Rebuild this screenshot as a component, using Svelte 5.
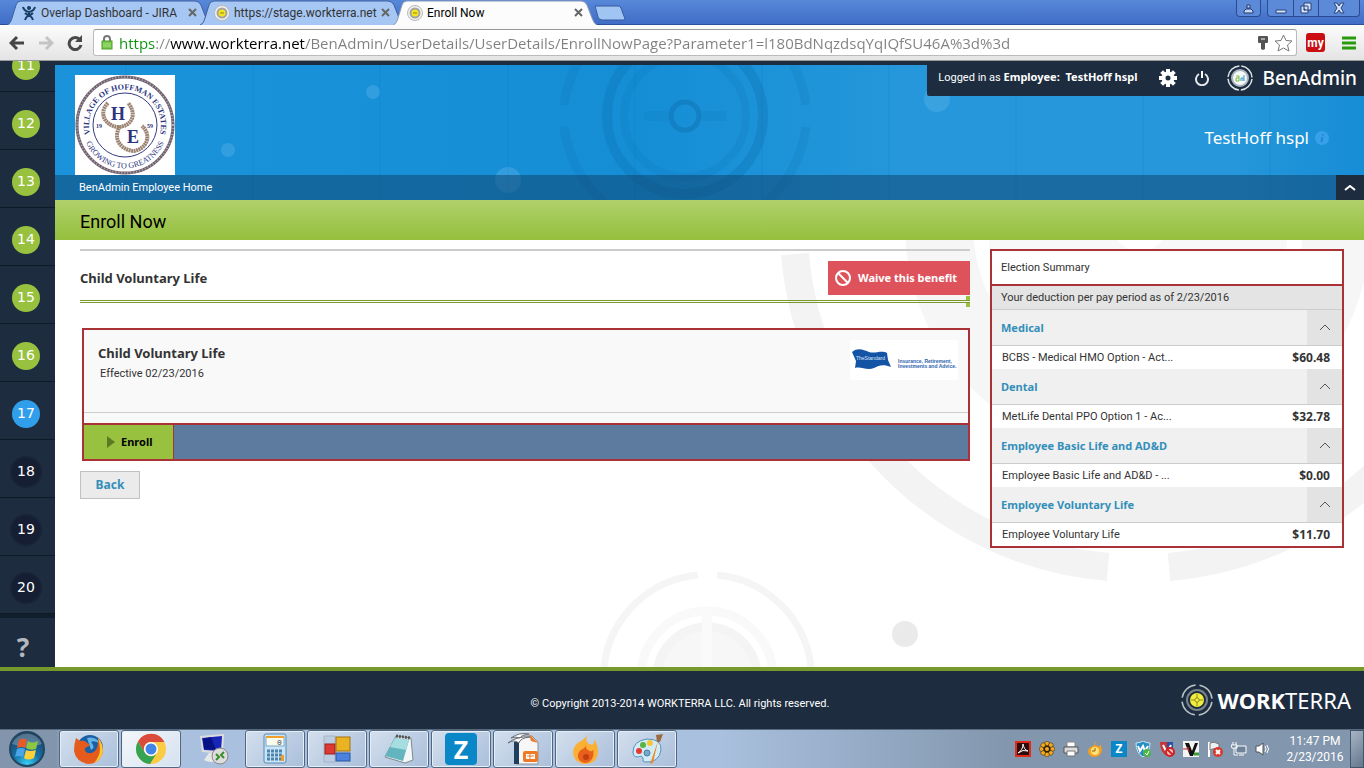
<script lang="ts">
  type Benefit = { name: string; plan: string; cost: string; open: boolean };

  let url = $state(
    "https://www.workterra.net/BenAdmin/UserDetails/UserDetails/EnrollNowPage?Parameter1=l180BdNqzdsqYqIQfSU46A%3d%3d",
  );
  let currentStep = $state(17);

  let benefits: Benefit[] = $state([
    { name: "Medical", plan: "BCBS - Medical HMO Option - Act...", cost: "$60.48", open: true },
    { name: "Dental", plan: "MetLife Dental PPO Option 1 - Ac...", cost: "$32.78", open: true },
    { name: "Employee Basic Life and AD&D", plan: "Employee Basic Life and AD&D - ...", cost: "$0.00", open: true },
    { name: "Employee Voluntary Life", plan: "Employee Voluntary Life", cost: "$11.70", open: true },
  ]);

  const tabs = [
    { title: "Overlap Dashboard - JIRA", icon: "jira", active: false },
    { title: "https://stage.workterra.net", icon: "terra", active: false },
    { title: "Enroll Now", icon: "terra", active: true },
  ];
  const steps = [11, 12, 13, 14, 15, 16, 17, 18, 19, 20];
  const petals = [0, 45, 90, 135, 180, 225, 270, 315];
</script>

{#snippet target(size: number, dot: string)}
  <svg width={size} height={size} viewBox="0 0 32 32" aria-hidden="true">
    <g fill="none">
      <circle cx="16" cy="16" r="15" stroke="#b9c0c6" stroke-width="1.5" stroke-dasharray="19.6 4" stroke-dashoffset="-2" />
      <circle cx="16" cy="16" r="10" stroke="#79838d" stroke-width="2" />
      <circle cx="16" cy="16" r="7" fill={dot} />
      <path d="M16 10v12M10 16h12" stroke="#8d8f2c" />
      <circle cx="16" cy="16" r="2.2" fill={dot} stroke="#8d8f2c" />
    </g>
  </svg>
{/snippet}

<div class="desktop">
  <header class="browser">
    <div class="tab-strip">
      <div class="tabs">
        {#each tabs as tab}
          <div class="tab" class:active={tab.active}>
            <svg class="tab-shape" viewBox="0 0 204 25" preserveAspectRatio="none" aria-hidden="true">
              <path
                d="M0 25C3 24 4 21 5 18L9 5Q10 1 14 1H188Q192 1 194 5L199 18Q201 24 204 25"
                fill={tab.active ? "#fcfcfc" : "#a6c6f3"}
                stroke={tab.active ? "#8898b8" : "#3f5f9f"}
              />
            </svg>
            {#if tab.icon === "jira"}
              <svg width="16" height="16" viewBox="0 0 16 16" aria-hidden="true">
                <circle cx="8" cy="3" r="2" fill="#173f66" />
                <path d="M2 2Q3 6 8 7Q13 6 14 2M8 7V10M8 10Q5 12 4 15M8 10Q11 12 12 15M4 8Q8 12 12 8" fill="none" stroke="#173f66" stroke-width="2" />
              </svg>
            {:else}
              <svg width="16" height="16" viewBox="0 0 16 16" aria-hidden="true">
                <circle cx="8" cy="8" r="7.500" fill="#f1f1f1" stroke="#b9b9b9" />
                <circle cx="8" cy="8" r="4.500" fill="#f5e51b" stroke="#a3a3a3" stroke-width="2" />
                <path d="M6 8h4" stroke="#8f861a" />
              </svg>
            {/if}
            <span class="tab-title">{tab.title}</span>
            <button class="tab-close" aria-label="Close tab">
              <svg width="9" height="9" viewBox="0 0 9 9"><path d="M1 1l7 7M8 1l-7 7" stroke="#666" stroke-width="2" /></svg>
            </button>
          </div>
        {/each}
        <button class="new-tab" aria-label="New tab">
          <svg width="32" height="16" viewBox="0 0 32 16">
            <path d="M1 1H24Q26 1 27 3L31 14Q31 15 29 15H8Q5 15 4 12Z" fill="#a1c5f3" stroke="#3659a0" />
          </svg>
        </button>
      </div>
      <div class="window-controls">
        <button class="user-btn" aria-label="Profile">
          <svg width="11" height="11" viewBox="0 0 11 11"><path d="M1 10V8L3 6H8L10 8V10ZM4 5V2H7V5Z" fill="#c4d7f4" stroke="#20386e" /></svg>
        </button>
        <div class="window-group">
          <button aria-label="Minimize"><svg width="12" height="12" viewBox="0 0 12 12"><path d="M1 8H11V11H1Z" fill="#d4e2f8" stroke="#27427b" /></svg></button>
          <button aria-label="Restore"><svg width="12" height="12" viewBox="0 0 12 12"><path d="M4 1H11V8H4ZM1 4H8V11H1ZM4 7H5V8H4Z" fill="#d4e2f8" stroke="#27427b" /></svg></button>
          <button class="wide" aria-label="Close"><svg width="12" height="12" viewBox="0 0 12 12"><path d="M1 1H4L6 4L8 1H11L8 6L11 11H8L6 8L4 11H1L4 6Z" fill="#d4e2f8" stroke="#27427b" /></svg></button>
        </div>
      </div>
    </div>

    <div class="toolbar">
      <button class="tool" aria-label="Back">
        <svg width="16" height="16" viewBox="0 0 16 16"><path d="M8 2L2 8L8 14M2 8H15" fill="none" stroke="#454545" stroke-width="3" /></svg>
      </button>
      <button class="tool" aria-label="Forward">
        <svg width="16" height="16" viewBox="0 0 16 16"><path d="M8 2L14 8L8 14M14 8H1" fill="none" stroke="#c4c4c4" stroke-width="3" /></svg>
      </button>
      <button class="tool" aria-label="Reload">
        <svg width="16" height="16" viewBox="0 0 16 16"><path d="M13 5A6 6 0 1 0 14 10" fill="none" stroke="#484848" stroke-width="3" /><path d="M15 0V7H8Z" fill="#484848" /></svg>
      </button>
      <div class="address">
        <svg width="12" height="15" viewBox="0 0 12 15" aria-hidden="true">
          <path d="M3 7V4A3 3 0 0 1 9 4V7" fill="none" stroke="#777" stroke-width="2" />
          <rect x="1" y="6" width="10" height="8" fill="#79c74c" stroke="#4c9b2b" />
          <path d="M2 9H10M2 11H10" stroke="#a4df7f" />
        </svg>
        <input type="text" aria-label="Address" bind:value={url} spellcheck="false" />
        <svg width="10" height="14" viewBox="0 0 10 14" aria-hidden="true"><path d="M0 1Q0 0 1 0H9Q10 0 10 1V6Q10 7 9 7H7V13L5 14L3 13V7H1Q0 7 0 6Z" fill="#555" /><path d="M3 3H7" stroke="#fff" /></svg>
        <svg width="19" height="18" viewBox="0 0 19 18" aria-hidden="true"><path d="M9.500 1L12 6.500L18 7L13.500 11L15 17L9.500 14L4 17L5.500 11L1 7L7 6.500Z" fill="#fff" stroke="#777" /></svg>
      </div>
      <button class="tool my" aria-label="my extension">my</button>
      <button class="tool" aria-label="Menu">
        <svg width="14" height="14" viewBox="0 0 14 14"><path d="M0 2H14M0 7H14M0 12H14" stroke="#289a0b" stroke-width="3" /></svg>
      </button>
    </div>
  </header>

  <div class="app">
    <nav class="steps" aria-label="Steps">
      <div class="step-list">
        {#each steps as step}
          <button class="step" aria-label="Step {step}" onclick={() => (currentStep = step)}>
            <span class="bubble" class:done={step < currentStep} class:current={step === currentStep}>{step}</span>
          </button>
        {/each}
      </div>
      <button class="help" aria-label="Help">?</button>
    </nav>

    <div class="page">
      <div class="banner">
        <svg class="banner-art" width="1309" height="135" viewBox="0 0 1309 135" aria-hidden="true">
          <g fill="none" stroke="#0d6fae" stroke-opacity=".32">
            <path d="M509 40A122 122 0 0 1 751 40M509 62A122 122 0 0 0 751 62" stroke-width="9" stroke-opacity=".18" />
            <circle cx="630" cy="51" r="78" stroke-width="10" />
            <circle cx="630" cy="51" r="61" stroke-width="8" stroke-opacity=".16" />
            <circle cx="630" cy="51" r="14" stroke-width="5" stroke-opacity=".45" />
            <path d="M589 51H613M647 51H671" stroke-width="10" stroke-opacity=".14" />
            <path d="M71 0V135M198 0V135M325 0V135M453 0V135M580 0V135M707 0V135M834 0V135M961 0V135M1088 0V135M1215 0V135" stroke-opacity=".2" />
          </g>
          <g fill="#6fbdf0" fill-opacity=".3">
            <circle cx="318" cy="27" r="7" />
            <circle cx="173" cy="85" r="7" />
            <circle cx="453" cy="115" r="13" />
            <circle cx="882" cy="34" r="13" />
          </g>
        </svg>

        <div class="banner-main">
          <svg class="seal" width="100" height="100" viewBox="0 0 100 100" role="img" aria-label="Village of Hoffman Estates seal">
            <defs>
              <path id="seal-top" d="M17.500 66A36 36 0 1 1 82.500 66" />
              <path id="seal-bottom" d="M9 62A42.500 42.500 0 0 0 91 62" />
            </defs>
            <rect width="100" height="100" fill="#fff" />
            <circle cx="50" cy="50" r="48" fill="none" stroke="#6d6070" stroke-width="3" />
            <circle cx="50" cy="50" r="48" fill="none" stroke="#b9a9a9" stroke-width="2" stroke-dasharray="1 2" />
            <circle cx="50" cy="50" r="32" fill="none" stroke="#343a80" />
            <g fill="none" stroke="#9c8372" stroke-width="4" stroke-dasharray="2 .5">
              <path d="M33 28C23 38 30 50 42 52C58 52 62 38 53 28" />
              <path d="M45 51C37 64 46 75 59 76C72 74 77 60 67 51" />
            </g>
            <g fill="#2c347e" font-family="Liberation Serif, serif" font-weight="bold">
              <text x="36" y="45" font-size="18">H</text>
              <text x="52" y="68" font-size="18">E</text>
              <text x="21" y="53" font-size="6">19</text>
              <text x="72" y="53" font-size="6">59</text>
              <text font-size="8"><textPath href="#seal-top" startOffset="50%" text-anchor="middle">VILLAGE OF HOFFMAN ESTATES</textPath></text>
              <text font-size="8" font-weight="normal"><textPath href="#seal-bottom" startOffset="50%" text-anchor="middle">GROWING TO GREATNESS</textPath></text>
            </g>
          </svg>

          <div class="banner-side">
            <div class="user-bar">
              <span>Logged in as <b>Employee:&nbsp; TestHoff hspl</b></span>
              <button class="icon-btn" aria-label="Settings">
                <svg width="18" height="18" viewBox="0 0 18 18">
                  <g fill="#fff">
                    {#each petals as angle}
                      <rect x="7" y="0" width="4" height="5" transform="rotate({angle} 9 9)" />
                    {/each}
                  </g>
                  <circle cx="9" cy="9" r="4.500" fill="none" stroke="#fff" stroke-width="4" />
                </svg>
              </button>
              <button class="icon-btn" aria-label="Log out">
                <svg width="14" height="16" viewBox="0 0 14 16"><path d="M4 4A6 6 0 1 0 10 4" fill="none" stroke="#e4e7ea" stroke-width="2" /><path d="M7 1V8" stroke="#fff" stroke-width="2" /></svg>
              </button>
              <div class="product">
                <svg width="26" height="26" viewBox="0 0 26 26" aria-hidden="true">
                  <g fill="none">
                    <circle cx="13" cy="13" r="12" stroke="#dfe5ea" stroke-width="1.500" stroke-dasharray="16.850 2" stroke-dashoffset="-1" />
                    <circle cx="13" cy="13" r="8" fill="#f4f8f8" stroke="#a9b4be" stroke-width="2" />
                    <path d="M9 11H12V16H9V13H12" stroke="#7fb840" stroke-width="1" />
                    <path d="M14 16V13H16V16M17 16V10" stroke="#3599c9" stroke-width="1" />
                  </g>
                </svg>
                <span>BenAdmin</span>
              </div>
            </div>
            <div class="member">
              <span>TestHoff hspl</span>
              <svg width="14" height="14" viewBox="0 0 14 14" aria-hidden="true"><circle cx="7" cy="7" r="7" fill="#35a1ec" /><path d="M8 3L7.700 4.500M7.300 6L6.500 11" stroke="#2486cd" stroke-width="2" /></svg>
            </div>
          </div>
        </div>

        <div class="breadcrumb">
          <a href="#home">BenAdmin Employee Home</a>
          <button aria-label="Collapse header">
            <svg width="12" height="6" viewBox="0 0 12 6"><path d="M1 5L6 1L11 5" fill="none" stroke="#fff" stroke-width="2" /></svg>
          </button>
        </div>
      </div>

      <h1>Enroll Now</h1>

      <div class="content">
        <svg class="content-art" width="1309" height="427" viewBox="0 0 1309 427" aria-hidden="true">
          <g fill="none">
            <circle cx="1083" cy="-15" r="233" fill="#f6f6f6" />
            <circle cx="1083" cy="-15" r="165" fill="#fff" />
            <circle cx="1083" cy="-15" r="150" fill="#f8f8f8" />
            <circle cx="1085" cy="-15" r="27" fill="#fff" />
            <path d="M740 14A343 343 0 0 0 1053 327M1114 327A343 343 0 0 0 1426 14" stroke="#f3f3f3" stroke-width="28" />
            <path d="M548 427A104 104 0 0 1 642 335M661 335A104 104 0 0 1 755 427" transform="translate(1)" stroke="#f5f5f5" stroke-width="7" />
            <circle cx="652" cy="437" r="66" stroke="#f9f9f9" stroke-width="9" />
            <circle cx="652" cy="437" r="50" fill="#f7f7f7" stroke="#f4f4f4" stroke-width="9" />
            <path d="M652 368V427" stroke="#fafafa" stroke-width="10" />
          </g>
          <circle cx="850" cy="394" r="13" fill="#eaeaea" />
        </svg>

        <main>
          <div class="benefit-head">
            <h2>Child Voluntary Life</h2>
            <button class="waive">
              <svg width="16" height="16" viewBox="0 0 16 16" aria-hidden="true"><circle cx="8" cy="8" r="7" fill="none" stroke="#fff" stroke-width="2" /><path d="M3 3L13 13" stroke="#fff" stroke-width="2" /></svg>
              Waive this benefit
            </button>
          </div>
          <div class="progress"></div>

          <section class="card">
            <div class="card-body">
              <div>
                <h2>Child Voluntary Life</h2>
                <p>Effective 02/23/2016</p>
              </div>
              <svg width="108" height="40" viewBox="0 0 108 40" role="img" aria-label="The Standard">
                <rect width="108" height="40" fill="#fff" />
                <path d="M2 12C8 7 14 10 19 12C25 14 31 10 37 13L38 20L41 27C34 24 29 25 24 28C17 31 11 26 5 28L6 21Z" fill="#1454a5" />
                <g font-family="Liberation Sans, sans-serif">
                  <text x="6" y="20" font-size="5" fill="#dce8f8">TheStandard</text>
                  <g font-size="5" font-weight="bold" fill="#2d63ae">
                    <text x="48" y="23">Insurance, Retirement,</text>
                    <text x="48" y="28">Investments and Advice.</text>
                  </g>
                </g>
              </svg>
            </div>
            <div class="card-gap"></div>
            <div class="card-actions">
              <button>
                <svg width="8" height="12" viewBox="0 0 8 12" aria-hidden="true"><path d="M0 0L8 6L0 12Z" fill="#5c7a22" /></svg>
                Enroll
              </button>
            </div>
          </section>

          <button class="back">Back</button>
        </main>

        <aside>
          <h3>Election Summary</h3>
          <p>Your deduction per pay period as of 2/23/2016</p>
          {#each benefits as benefit}
            <button class="benefit" aria-expanded={benefit.open} onclick={() => (benefit.open = !benefit.open)}>
              <span>{benefit.name}</span>
              <span class="chevron">
                <svg width="12" height="7" viewBox="0 0 12 7" aria-hidden="true"><path d="M1 6L6 1L11 6" fill="none" stroke="#555" /></svg>
              </span>
            </button>
            {#if benefit.open}
              <table>
                <tbody>
                  <tr>
                    <td>{benefit.plan}</td>
                    <td class="cost">{benefit.cost}</td>
                  </tr>
                </tbody>
              </table>
            {/if}
          {/each}
        </aside>
      </div>
    </div>
  </div>

  <footer>
    <span></span>
    <span class="copyright">© Copyright 2013-2014 WORKTERRA LLC. All rights reserved.</span>
    <div class="brand">
      {@render target(32, "#f2ee3a")}
      <span><b>WORK</b>TERRA</span>
    </div>
  </footer>

  <div class="taskbar">
    <button class="start" aria-label="Start">
      <svg width="38" height="38" viewBox="0 0 38 38">
        <defs>
          <radialGradient id="orb" cx=".5" cy=".95" r=".9">
            <stop offset="0" stop-color="#39d3f5" />
            <stop offset=".45" stop-color="#1571a8" />
            <stop offset="1" stop-color="#1c4163" />
          </radialGradient>
        </defs>
        <circle cx="19" cy="19" r="17" fill="url(#orb)" stroke="#24455f" stroke-width="2" />
        <path d="M4 14A16 16 0 0 1 34 14Q19 20 4 14Z" fill="#fff" opacity=".25" />
        <path d="M11 10Q15 7 19 10L17 18Q13 16 9 18Z" fill="#ea5a28" />
        <path d="M20 11Q24 14 30 11L28 19Q22 21 18 18Z" fill="#8ec63f" />
        <path d="M9 19Q13 17 17 19L15 27Q11 25 7 27Z" fill="#4aa5e8" />
        <path d="M18 20Q22 22 28 20L26 28Q20 31 16 28Z" fill="#fcd03a" />
      </svg>
    </button>
    <div class="tasks">
      <button class="task" aria-label="Firefox">
        <svg width="32" height="32" viewBox="0 0 32 32">
          <circle cx="17" cy="15" r="13" fill="#1d5fa5" />
          <path d="M14 5Q23 3 27 11Q22 7 18 9Q23 14 18 17Z" fill="#60b5e5" />
          <path d="M3 5L7 8Q11 7 13 9L17 12L14 14Q10 15 13 19Q17 22 22 18Q26 14 25 5Q32 13 29 22Q25 31 15 31Q3 29 1 18Q1 11 3 5Z" fill="#e55b1b" />
          <path d="M25 5Q32 13 29 22Q26 28 21 30Q27 23 27 16Q27 10 25 5Z" fill="#fbc92d" />
        </svg>
      </button>
      <button class="task active" aria-label="Chrome">
        <svg width="32" height="32" viewBox="0 0 32 32">
          <circle cx="16" cy="16" r="15" fill="#fbcb43" />
          <path d="M3 8.500A15 15 0 0 1 29.500 9H16A7 7 0 0 0 9.500 19Z" fill="#da4b3e" />
          <path d="M3 8.500A15 15 0 0 0 15 31L21.500 20.500A7 7 0 0 1 9.500 19Z" fill="#34a353" />
          <circle cx="16" cy="16" r="7" fill="#fff" />
          <circle cx="16" cy="16" r="5.500" fill="#4285e8" />
        </svg>
      </button>
      <button class="task plain" aria-label="Remote Desktop">
        <svg width="32" height="32" viewBox="0 0 32 32">
          <path d="M3 3L27 1L26 21L5 19Z" fill="#ddd" />
          <path d="M5 5L25 3L24 18L7 17Z" fill="#1726b9" />
          <path d="M14 4L19 17L7 16L6 6Z" fill="#071285" />
          <path d="M12 20H18L21 27Q14 31 7 27Z" fill="#e8e8e8" />
          <circle cx="23" cy="23" r="8" fill="#ddd" stroke="#888" />
          <path d="M19 21L22 24L19 27M27 19L24 22L27 25" stroke="#398c2c" stroke-width="2" fill="none" />
        </svg>
      </button>
      <button class="task" aria-label="Calculator">
        <svg width="32" height="32" viewBox="0 0 32 32">
          <rect x="5" y="1" width="22" height="29" rx="2" fill="#c9e5f7" stroke="#578bb2" />
          <rect x="7" y="4" width="18" height="9" fill="#f8fbed" stroke="#7baac9" />
          <path d="M7 4H25" stroke="#f1a02c" stroke-width="2" />
          <text x="18" y="12" font-family="Liberation Mono, monospace" font-size="8" fill="#334">0</text>
          <path d="M8 18H24M8 22H24M8 26H24" stroke="#4c84ab" stroke-width="3" stroke-dasharray="3 1" />
          <path d="M22 22H25V28H22Z" fill="#f29a24" />
        </svg>
      </button>
      <button class="task" aria-label="Office tools">
        <svg width="32" height="32" viewBox="0 0 32 32">
          <path d="M3 3H14V29H3Z" fill="#bccde2" stroke="#a6b4c4" />
          <rect x="4" y="11" width="10" height="10" fill="#dc3a32" stroke="#9f1f1a" />
          <rect x="15" y="4" width="14" height="14" fill="#eab323" stroke="#a3730b" />
          <rect x="15" y="20" width="14" height="8" fill="#4b82df" stroke="#2955a2" />
        </svg>
      </button>
      <button class="task" aria-label="Notepad">
        <svg width="32" height="32" viewBox="0 0 32 32">
          <path d="M13 3L28 5L30 27L22 30L2 24Z" fill="#f3f6f6" stroke="#7b8a8f" />
          <path d="M12 5L26 7L20 28L2 23Z" fill="#62b5bf" />
          <path d="M12 5L26 7L23 17L7 14Z" fill="#a6dde0" />
          <path d="M13 3L27 5" stroke="#555" stroke-width="3" stroke-dasharray="2 1" />
        </svg>
      </button>
      <button class="task" aria-label="Zimbra">
        <span class="z-logo">Z</span>
      </button>
      <button class="task" aria-label="OpenOffice Impress">
        <svg width="32" height="32" viewBox="0 0 32 32">
          <path d="M9 3H25L31 9V31H9Z" fill="#f7f7f7" stroke="#8c929a" />
          <path d="M7 9H12V31H7Z" fill="#1f3e5d" />
          <path d="M22 1L31 10L24 8Z" fill="#ef7924" />
          <path d="M1 10Q10 3 23 4Q13 5 12 10Q7 6 1 10ZM4 5Q12 -1 22 1Q14 2 13 5Q8 3 4 5Z" fill="#fff" stroke="#6a7077" />
          <rect x="16" y="18" width="15" height="11" rx="2" fill="#ef7924" />
          <path d="M19 21H28V26H19Z" fill="#fff" />
          <path d="M20 23H27M23 21V26" stroke="#ef7924" />
        </svg>
      </button>
      <button class="task" aria-label="Flame">
        <svg width="32" height="32" viewBox="0 0 32 32">
          <path d="M19 0Q15 8 20 11Q26 14 25 6Q31 15 28 24Q24 32 14 31Q4 28 4 19Q5 11 12 8Q17 5 19 0Z" fill="#fbb034" />
          <path d="M17 11Q16 17 21 18Q24 19 24 16Q26 25 20 29Q13 32 9 25Q8 18 14 16Q17 14 17 11Z" fill="#e7611d" />
          <circle cx="17" cy="24" r="3" fill="#c33d10" />
        </svg>
      </button>
      <button class="task" aria-label="Paint">
        <svg width="32" height="32" viewBox="0 0 32 32">
          <path d="M2 19Q2 8 16 6Q31 6 30 17Q28 30 14 29Q11 29 12 25Q11 22 7 24Q2 24 2 19Z" fill="#d3ebf7" stroke="#5492bd" />
          <circle cx="8" cy="18" r="3" fill="#e23b31" />
          <circle cx="12" cy="12" r="3" fill="#59b442" />
          <circle cx="19" cy="10" r="3" fill="#f8c635" />
          <circle cx="16" cy="20" r="3" fill="#7aaacb" stroke="#447ba0" />
          <path d="M27 8L22 30L19 31L20 28Z" fill="#eb8a26" />
          <path d="M25 2L32 1L29 9L26 9Z" fill="#9b6b43" />
        </svg>
      </button>
    </div>

    <div class="tray">
      <svg width="16" height="16" viewBox="0 0 16 16" aria-hidden="true"><rect x="1" y="1" width="14" height="14" fill="#2c0b0b" stroke="#e22a1b" stroke-width="2" /><path d="M3 12Q8 9 8 3Q9 9 13 10Q8 8 3 12Z" fill="none" stroke="#fff" /></svg>
      <svg width="16" height="16" viewBox="0 0 16 16" aria-hidden="true">
        <circle cx="8" cy="8" r="5" fill="#292115" />
        {#each petals as angle}
          <circle cx="8" cy="2.500" r="2.300" fill="#f5a81c" stroke="#292115" stroke-width=".5" transform="rotate({angle} 8 8)" />
        {/each}
        <circle cx="8" cy="8" r="2" fill="#f5a81c" />
      </svg>
      <svg width="16" height="16" viewBox="0 0 16 16" aria-hidden="true"><path d="M4 1H12V6H4Z" fill="#fff" stroke="#888" /><path d="M1 6H15V12H1Z" fill="#ddd" stroke="#555" /><path d="M4 10H12V15H4Z" fill="#fff" stroke="#777" /></svg>
      <svg width="16" height="16" viewBox="0 0 16 16" aria-hidden="true"><path d="M9 0Q5 4 11 5Q14 6 13 3Q16 8 14 12Q12 16 7 16Q1 15 1 10Q2 6 6 5Q9 3 9 0Z" fill="#f6a01e" /><circle cx="8" cy="10" r="4" fill="#fbe27a" /><path d="M8 7V10H5" stroke="#8c5a0c" fill="none" /></svg>
      <span class="z-logo small">Z</span>
      <svg width="16" height="16" viewBox="0 0 16 16" aria-hidden="true"><path d="M1 2Q5 2 8 0Q11 2 15 2Q15 12 8 16Q1 12 1 2Z" fill="#258fc4" stroke="#cdeaf7" /><path d="M3 5L5 10L8 5L10 10L13 5" fill="none" stroke="#fff" stroke-width="2" /><circle cx="12" cy="12" r="4" fill="#4eb446" /><path d="M10 12L12 14L14 10" fill="none" stroke="#fff" /></svg>
      <svg width="16" height="16" viewBox="0 0 16 16" aria-hidden="true"><path d="M1 1H8V15Q1 11 1 1Z" fill="#c93434" /><path d="M8 1H14V8L8 15Z" fill="#2b4fa5" /><path d="M4 4L8 12L12 4" fill="none" stroke="#fff" stroke-width="2" /><circle cx="11" cy="11" r="4" fill="#f3c4c4" stroke="#cf2222" stroke-width="2" /><path d="M8 8L14 14" stroke="#cf2222" stroke-width="2" /></svg>
      <svg width="16" height="16" viewBox="0 0 16 16" aria-hidden="true"><rect width="16" height="16" fill="#f4f4f4" /><path d="M2 2H6L9 10L12 2H15L10 15H7Z" fill="#111" /><path d="M0 8H4L5 6L6 11" stroke="#b42424" fill="none" /><path d="M11 13H16" stroke="#3a9b3a" stroke-width="3" /></svg>
      <svg width="16" height="16" viewBox="0 0 16 16" aria-hidden="true"><path d="M2 1V16" stroke="#fff" stroke-width="2" /><path d="M3 2Q7 0 12 3V9Q7 6 3 9Z" fill="#eef1f4" stroke="#777" /><circle cx="11" cy="11" r="5" fill="#d7382b" /><path d="M9 9L13 13M13 9L9 13" stroke="#fff" stroke-width="2" /></svg>
      <svg width="16" height="16" viewBox="0 0 16 16" aria-hidden="true"><path d="M5 5H15V12H5ZM8 14H13M2 1V4M5 1V4M0 4H6V7H1ZM3 7V14H7" fill="#6f8298" stroke="#fff" /></svg>
      <svg width="16" height="16" viewBox="0 0 16 16" aria-hidden="true"><path d="M1 5H4L8 2V14L4 11H1Z" fill="#fff" stroke="#555" /><path d="M10 5Q12 8 10 11M12 4Q15 8 12 12" fill="none" stroke="#fff" /></svg>
      <div class="clock">
        <span>11:47 PM</span>
        <span>2/23/2016</span>
      </div>
    </div>
    <button class="show-desktop" aria-label="Show desktop"></button>
  </div>
</div>

<style>
  :global(body) {
    margin: 0;
  }

  .desktop {
    --navy: #1d2d3f;
    --red: #a83235;
    --green: #97c13f;
    --link: #338fba;
    --wide-font: "Noto Sans", sans-serif;
    display: flex;
    flex-direction: column;
    min-height: 100vh;
    background: #fff;
    color: #333;
    font-family: Roboto, sans-serif;
    font-size: 11px;
    line-height: 16px;
  }

  button {
    margin: 0;
    padding: 0;
    border: 0;
    background: none;
    color: inherit;
    font: inherit;
    cursor: pointer;
  }

  h1,
  h2,
  h3,
  p {
    margin: 0;
  }

  svg {
    display: block;
    flex-shrink: 0;
  }

  /* browser window */
  .tab-strip {
    display: flex;
    justify-content: space-between;
    height: 25px;
    background: linear-gradient(#5788d8, #3f6cc6);
    box-shadow: inset 0 -1px #2b509b;
    font-size: 12px;
  }

  .tabs {
    display: flex;
    padding-left: 7px;
  }

  .tab {
    position: relative;
    display: flex;
    align-items: center;
    gap: 4px;
    box-sizing: border-box;
    width: 204px;
    margin-right: -11px;
    padding: 0 14px;
    color: #333;
  }

  .tab.active {
    z-index: 1;
    color: #000;
  }

  .tab > * {
    position: relative;
  }

  .tab .tab-shape {
    position: absolute;
    inset: 0;
    width: 100%;
    height: 100%;
  }

  .tab-title {
    flex: 1;
    overflow: hidden;
    white-space: nowrap;
  }

  .new-tab {
    padding: 5px 0 4px 8px;
  }

  .window-controls {
    display: flex;
    gap: 6px;
    padding-right: 4px;
  }

  .user-btn,
  .window-group {
    box-sizing: border-box;
    height: 17px;
    border: 1px solid #2a4b92;
    border-top: 0;
    border-radius: 0 0 4px 4px;
    background: #5d8ad8;
  }

  .user-btn,
  .window-group button {
    display: flex;
    justify-content: center;
    align-items: center;
    width: 25px;
  }

  .window-group {
    display: flex;
  }

  .window-group button + button {
    border-left: 1px solid #2a4b92;
  }

  .window-group .wide {
    width: 41px;
  }

  .toolbar {
    display: flex;
    align-items: center;
    gap: 13px;
    height: 35px;
    padding: 0 8px 0 9px;
    border-bottom: 1px solid #999;
    background: linear-gradient(#fcfcfc, #e4e4e4);
  }

  .tool {
    flex-shrink: 0;
  }

  .address {
    display: flex;
    flex: 1;
    align-items: center;
    gap: 6px;
    box-sizing: border-box;
    height: 27px;
    min-width: 0;
    margin: 0 -8px 0 -3px;
    padding: 0 3px 0 7px;
    border: 1px solid #bbb;
    border-top-color: #999;
    border-radius: 3px;
    background: #fff;
  }

  .address input {
    flex: 1;
    min-width: 0;
    padding: 0;
    border: 0;
    outline: 0;
    background: linear-gradient(90deg, #0b930b 0 36px, #888 36px 51px, #000 51px 186px, #808080 186px);
    background-clip: text;
    color: transparent;
    font-family: "Open Sans", sans-serif;
    font-size: 15px;
    line-height: 24px;
  }

  .my {
    width: 19px;
    height: 19px;
    margin: 0 4px;
    border-radius: 3px;
    background: #cb0e12;
    color: #fff;
    font-size: 12px;
    font-weight: bold;
  }

  /* application */
  .app {
    display: flex;
    flex: 1;
    background: var(--navy);
  }

  .steps {
    display: flex;
    flex-direction: column;
    width: 55px;
    flex-shrink: 0;
    color: #fff;
    font-family: "DejaVu Sans", sans-serif;
    font-size: 14px;
  }

  .step-list {
    display: flex;
    flex: 1 1 0;
    flex-direction: column;
    justify-content: flex-end;
    overflow: hidden;
    min-height: 0;
    border-bottom: 4px solid #111e2c;
  }

  .step {
    display: flex;
    flex-shrink: 0;
    justify-content: center;
    box-sizing: border-box;
    height: 58px;
    padding-top: 18px;
    padding-right: 3px;
    border-bottom: 1px solid #0e1a27;
  }

  .bubble {
    width: 28px;
    height: 28px;
    border-radius: 50%;
    background: #161e33;
    box-shadow: 0 0 0 2px #182339;
    line-height: 27px;
    text-align: center;
  }

  .bubble.done {
    background: var(--green);
    box-shadow: none;
  }

  .bubble.current {
    background: #319eeb;
    box-shadow: none;
  }

  .help {
    height: 49px;
    padding: 10px 9px 2px 0;
    color: #b5b9bf;
    font-family: var(--wide-font);
    font-size: 26px;
    font-weight: bold;
    line-height: 34px;
  }

  .page {
    display: flex;
    flex: 1;
    flex-direction: column;
    min-width: 0;
    padding-top: 4px;
  }

  .banner {
    position: relative;
    overflow: hidden;
    background: linear-gradient(90deg, #1b93db, #158ed6 45%, #2597da 65%, #2597da 90%, #178dd6);
    color: #fff;
  }

  .banner-art,
  .content-art {
    position: absolute;
    top: 0;
    left: 0;
  }

  .banner-main {
    position: relative;
    display: flex;
    align-items: flex-end;
    justify-content: space-between;
    height: 110px;
    padding-left: 20px;
  }

  .banner-side {
    display: flex;
    flex-direction: column;
    align-items: flex-end;
    align-self: flex-start;
    gap: 30px;
  }

  .user-bar {
    display: flex;
    align-items: center;
    height: 31px;
    padding: 0 7px 6px 11px;
    box-sizing: border-box;
    background: var(--navy);
    border-radius: 0 0 0 2px;
  }

  .user-bar b {
    font-family: var(--wide-font);
  }

  .icon-btn {
    margin-left: 22px;
  }

  .icon-btn + .icon-btn {
    margin-left: 18px;
  }

  .product {
    display: flex;
    align-items: center;
    gap: 9px;
    margin-left: 18px;
    font-family: var(--wide-font);
    font-size: 19px;
    font-weight: 500;
  }

  .member {
    display: flex;
    align-items: center;
    gap: 6px;
    padding-right: 35px;
    font-family: var(--wide-font);
    font-size: 17px;
    line-height: 24px;
  }

  .breadcrumb {
    position: relative;
    display: flex;
    justify-content: space-between;
    height: 25px;
    padding-left: 24px;
    background: rgba(14, 64, 104, 0.5);
    line-height: 26px;
  }

  .breadcrumb a {
    color: #fff;
    text-decoration: none;
  }

  .breadcrumb button {
    display: flex;
    align-items: center;
    justify-content: center;
    width: 28px;
    background: var(--navy);
  }

  h1 {
    height: 40px;
    padding-left: 25px;
    background: linear-gradient(#b0d06b, #95c03d);
    color: #000;
    font-size: 18px;
    font-weight: 400;
    line-height: 43px;
  }

  .content {
    position: relative;
    display: flex;
    flex: 1;
    align-items: flex-start;
    gap: 20px;
    overflow: hidden;
    padding: 9px 20px 20px 25px;
    background: #fff;
  }

  main {
    position: relative;
    flex: 1;
    min-width: 0;
    border-top: 2px solid #ccc;
  }

  h2 {
    color: #333;
    font-family: var(--wide-font);
    font-size: 13px;
    font-weight: bold;
    line-height: 20px;
  }

  .benefit-head {
    display: flex;
    align-items: center;
    justify-content: space-between;
    padding: 10px 0 5px;
  }

  .waive {
    display: flex;
    align-items: center;
    gap: 7px;
    width: 142px;
    height: 34px;
    padding-left: 7px;
    background: #de525c;
    color: #fff;
    font-family: var(--wide-font);
    font-weight: bold;
  }

  .progress {
    height: 1px;
    border: 1px solid #779a2b;
    border-width: 1px 0;
  }

  .progress::after {
    display: block;
    width: 4px;
    height: 11px;
    margin: -5px 0 0 auto;
    background: linear-gradient(var(--green) 0 4px, #779a2b 4px 5px, #fff 5px 6px, #779a2b 6px 7px, var(--green) 7px);
    content: "";
  }

  .card {
    margin: 25px 0 10px 2px;
    border: 2px solid var(--red);
    background: #f9f9f9;
  }

  .card-body {
    display: flex;
    align-items: flex-start;
    justify-content: space-between;
    box-sizing: border-box;
    height: 83px;
    padding: 10px 10px 0 14px;
    border-bottom: 1px solid #ccc;
  }

  .card-body h2 {
    padding-top: 3px;
  }

  .card-body p {
    padding: 3px 2px 0;
  }

  .card-gap {
    height: 10px;
  }

  .card-actions {
    display: flex;
    height: 34px;
    border-top: 2px solid var(--red);
    background: #5d7b9f;
  }

  .card-actions button {
    display: flex;
    align-items: center;
    gap: 6px;
    padding: 0 21px 0 23px;
    border-right: 1px solid var(--red);
    background: var(--green);
    color: #000;
    font-family: var(--wide-font);
    font-weight: bold;
  }

  .back {
    box-sizing: border-box;
    width: 60px;
    height: 28px;
    border: 1px solid #c1c1c1;
    background: #ebebeb;
    color: var(--link);
    font-family: var(--wide-font);
    font-size: 12px;
    font-weight: bold;
  }

  aside {
    position: relative;
    width: 350px;
    flex-shrink: 0;
    border: 2px solid var(--red);
    background: #fff;
  }

  h3 {
    padding: 1px 9px 0;
    border-bottom: 2px solid var(--red);
    font-size: 11px;
    font-weight: normal;
    line-height: 32px;
  }

  aside p {
    padding: 1px 9px 0;
    border-bottom: 1px solid #ccc;
    background: #e4e4e4;
    line-height: 22px;
  }

  .benefit {
    display: flex;
    align-items: center;
    justify-content: space-between;
    box-sizing: border-box;
    width: 100%;
    height: 36px;
    padding-left: 9px;
    border-bottom: 1px solid #ccc;
    background: #f0f0f0;
    color: var(--link);
    font-family: var(--wide-font);
    font-weight: bold;
  }

  .chevron {
    display: flex;
    align-items: center;
    justify-content: center;
    width: 35px;
    height: 100%;
    background: #e3e3e3;
  }

  table {
    width: 100%;
    border-collapse: collapse;
  }

  td {
    height: 23px;
    padding: 0 10px;
  }

  .cost {
    padding: 0 12px;
    font-family: var(--wide-font);
    font-size: 12px;
    font-weight: bold;
    text-align: right;
  }

  footer {
    display: grid;
    grid-template-columns: 1fr auto 1fr;
    align-items: center;
    height: 58px;
    padding: 0 13px 0 9px;
    border-top: 4px solid #77982b;
    background: var(--navy);
    color: #fff;
  }

  .copyright {
    padding-top: 8px;
  }

  .brand {
    display: flex;
    align-items: center;
    justify-content: flex-end;
    gap: 5px;
    font-family: var(--wide-font);
    font-size: 22px;
  }

  /* desktop taskbar */
  .taskbar {
    display: flex;
    box-sizing: border-box;
    height: 39px;
    border-top: 1px solid #56697d;
    background: linear-gradient(90deg, #8295ac 0 56px, #a9c0de 70px, #a9c0de 720px, #8296ad 1010px);
  }

  .start {
    width: 59px;
    padding-left: 8px;
  }

  .tasks {
    display: flex;
    flex: 1;
    gap: 2px;
  }

  .task {
    display: flex;
    align-items: center;
    justify-content: center;
    box-sizing: border-box;
    width: 60px;
    border: 1px solid #52677f;
    border-radius: 3px;
    background: linear-gradient(135deg, #d3dfed, #aabfdb);
    box-shadow: inset 0 0 0 1px #e6eef7;
  }

  .task.active {
    background: linear-gradient(135deg, #f4f7fb, #d5e1ef);
  }

  .task.plain {
    border-color: transparent;
    background: none;
    box-shadow: none;
  }

  .z-logo {
    width: 32px;
    height: 32px;
    border-radius: 4px;
    background: #0a87c7;
    color: #fff;
    font-family: var(--wide-font);
    font-size: 25px;
    font-weight: bold;
    line-height: 32px;
    text-align: center;
  }

  .z-logo.small {
    width: 16px;
    height: 16px;
    border-radius: 0;
    font-size: 12px;
    line-height: 16px;
  }

  .tray {
    display: flex;
    align-items: center;
    gap: 8px;
    color: #fff;
  }

  .clock {
    display: flex;
    flex-direction: column;
    width: 68px;
    margin-left: 2px;
    font-size: 12px;
    text-align: center;
  }

  .show-desktop {
    width: 14px;
    margin-left: 1px;
    border: 1px solid #44566a;
    background: linear-gradient(135deg, #a7b4c4, #64778e);
  }
</style>
